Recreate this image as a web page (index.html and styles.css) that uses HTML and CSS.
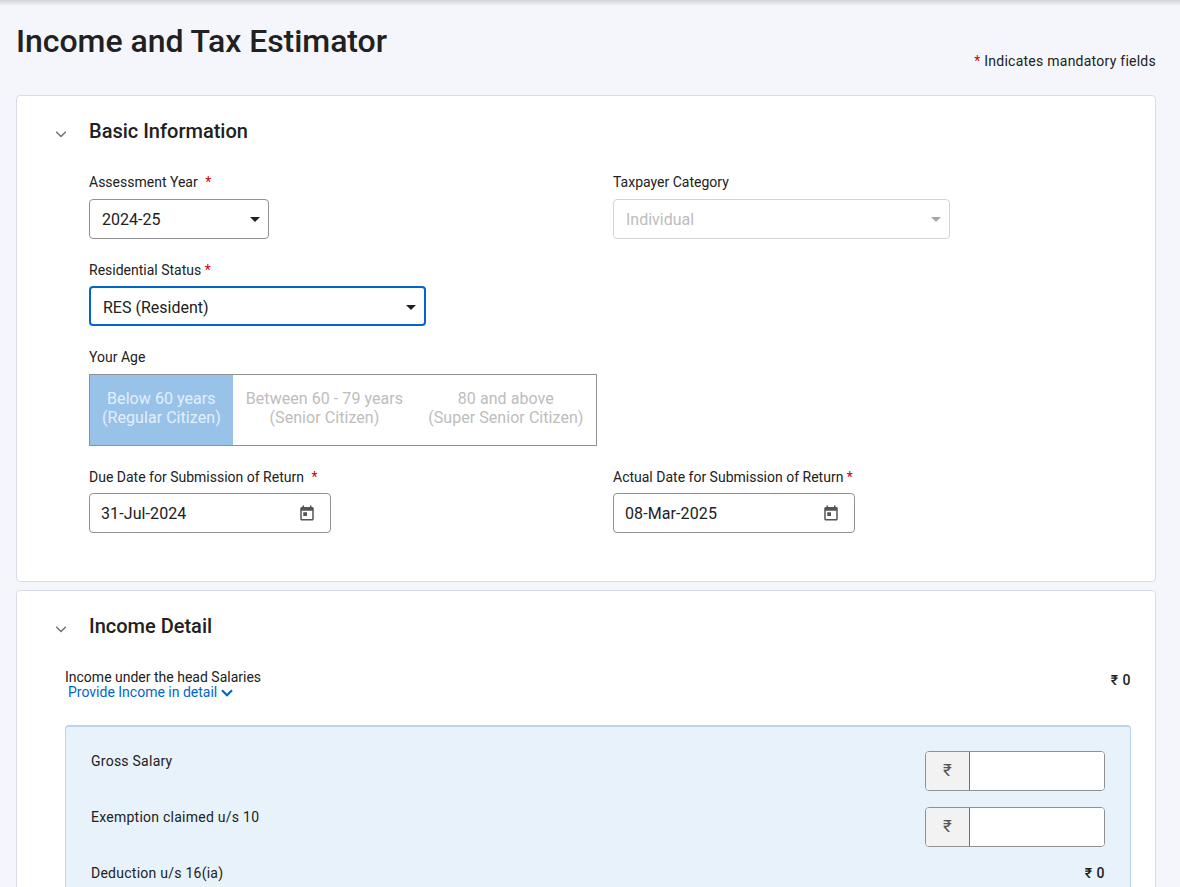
FILE: index.html
```html
<!DOCTYPE html>
<html lang="en">
<head>
    <meta charset="UTF-8">
    <meta name="viewport" content="width=device-width, initial-scale=1.0">
    <title>Income and Tax Estimator</title>
    <link rel="stylesheet" href="styles.css">
</head>
<body>
    <div class="top_shadow"></div>

    <div class="page_head">
        <h1>Income and Tax Estimator</h1>
        <p class="mandatory_note"><span class="req">*</span> Indicates mandatory fields</p>
    </div>

    <!-- Basic information -->
    <section class="card card_basic">
        <div class="card_head">
            <svg class="chevron" width="14" height="14" viewBox="0 0 14 14"><path d="M2.2 4.8 7 9.6l4.8-4.8" fill="none" stroke="#6f6f6f" stroke-width="1.4"/></svg>
            <h2>Basic Information</h2>
        </div>

        <div class="form_row row_year">
            <div class="field">
                <label>Assessment Year <span class="req req_gap">*</span></label>
                <div class="select select_year"><span>2024-25</span><i class="caret"></i></div>
            </div>
            <div class="field">
                <label>Taxpayer Category</label>
                <div class="select select_wide select_disabled"><span>Individual</span><i class="caret"></i></div>
            </div>
        </div>

        <div class="form_row row_status">
            <div class="field">
                <label>Residential Status <span class="req">*</span></label>
                <div class="select select_wide select_focus"><span>RES (Resident)</span><i class="caret"></i></div>
            </div>
        </div>

        <div class="form_row row_age">
            <div class="field">
                <label>Your Age</label>
                <div class="age_toggle">
                    <div class="age_opt age_active">Below 60 years<br>(Regular Citizen)</div>
                    <div class="age_opt age_mid">Between 60 - 79 years<br>(Senior Citizen)</div>
                    <div class="age_opt age_last">80 and above<br>(Super Senior Citizen)</div>
                </div>
            </div>
        </div>

        <div class="form_row row_dates">
            <div class="field">
                <label>Due Date for Submission of Return <span class="req req_gap">*</span></label>
                <div class="date_input">
                    <span>31-Jul-2024</span>
                    <svg width="18" height="18" viewBox="0 0 24 24"><path fill="#555" d="M19 4h-1V2h-2v2H8V2H6v2H5c-1.1 0-2 .9-2 2v14c0 1.1.9 2 2 2h14c1.1 0 2-.9 2-2V6c0-1.100-.9-2-2-2zm0 16H5V9h14v11zM7 11h5v5H7z"/></svg>
                </div>
            </div>
            <div class="field">
                <label>Actual Date for Submission of Return <span class="req">*</span></label>
                <div class="date_input">
                    <span>08-Mar-2025</span>
                    <svg width="18" height="18" viewBox="0 0 24 24"><path fill="#555" d="M19 4h-1V2h-2v2H8V2H6v2H5c-1.1 0-2 .9-2 2v14c0 1.1.9 2 2 2h14c1.1 0 2-.9 2-2V6c0-1.100-.9-2-2-2zm0 16H5V9h14v11zM7 11h5v5H7z"/></svg>
                </div>
            </div>
        </div>
    </section>

    <!-- Income detail -->
    <section class="card card_income">
        <div class="card_head">
            <svg class="chevron" width="14" height="14" viewBox="0 0 14 14"><path d="M2.2 4.8 7 9.6l4.8-4.8" fill="none" stroke="#6f6f6f" stroke-width="1.4"/></svg>
            <h2>Income Detail</h2>
        </div>

        <div class="income_head">
            <div>
                <div class="income_title">Income under the head Salaries</div>
                <a class="detail_link">Provide Income in detail
                    <svg width="12" height="8" viewBox="0 0 12 8"><path d="M1 1.3 6 6.3l5-5" fill="none" stroke="#0066cc" stroke-width="2.2"/></svg>
                </a>
            </div>
            <div class="amount amount_total">₹ 0</div>
        </div>

        <div class="salary_panel">
            <div class="salary_row">
                <span class="salary_label">Gross Salary</span>
                <div class="rupee_input"><span class="rupee_addon">₹</span><input type="text"></div>
            </div>
            <div class="salary_row">
                <span class="salary_label">Exemption claimed u/s 10</span>
                <div class="rupee_input"><span class="rupee_addon">₹</span><input type="text"></div>
            </div>
            <div class="salary_row">
                <span class="salary_label">Deduction u/s 16(ia)</span>
                <div class="amount amount_row">₹ 0</div>
            </div>
        </div>
    </section>
</body>
</html>
```
FILE: styles.css
```css
* {
    box-sizing: border-box;
}

html, body {
    height: 887px;
    overflow: hidden;
}

body {
    margin: 0;
    padding: 0 24px 0 16px;
    background-color: #f4f6fb;
    font-family: Roboto, "Noto Sans", sans-serif;
    color: #212121;
}

.top_shadow {
    height: 6px;
    margin: 0 -24px 0 -16px;
    background: linear-gradient(#d2d3d7, #f4f6fb);
}

.page_head {
    height: 89px;
    display: flex;
    justify-content: space-between;
    align-items: flex-start;
}

h1 {
    margin: 14px 0 0;
    font-size: 32px;
    line-height: 42px;
    font-weight: 500;
    letter-spacing: -0.04px;
}

.mandatory_note {
    margin: 46px 0 0;
    font-size: 14px;
    line-height: 18px;
    letter-spacing: 0.25px;
}

.req {
    color: #d50000;
}

.req_gap {
    margin-left: 4px;
}

.card {
    background-color: #fff;
    border: 1px solid #d8dcea;
    border-radius: 4px;
}

.card_basic {
    height: 487px;
    padding: 21px 0 0 72px;
}

.card_income {
    margin-top: 8px;
    height: 400px;
    padding: 21px 24px 0 48px;
}

.card_head {
    display: flex;
    align-items: center;
    height: 28px;
}

.card_basic .card_head {
    margin-left: -35px;
}

.card_income .card_head {
    margin-left: -11px;
}

.chevron {
    margin: 5px 21px 0 0;
}

h2 {
    margin: 0;
    font-size: 20px;
    line-height: 28px;
    font-weight: 500;
}

.form_row {
    display: flex;
}

.row_year {
    margin-top: 28px;
}

.row_status {
    margin-top: 22px;
}

.row_status label {
    margin-bottom: 7px;
}

.row_age {
    margin-top: 22px;
}

.row_dates {
    margin-top: 22px;
}

.row_dates label {
    margin-bottom: 7px;
}

.field {
    width: 524px;
}

label {
    display: block;
    height: 18px;
    margin-bottom: 8px;
    font-size: 14px;
    line-height: 18px;
}

.select, .date_input {
    display: flex;
    align-items: center;
    justify-content: space-between;
    height: 40px;
    border: 1px solid #919191;
    border-radius: 4px;
    background-color: #fff;
    font-size: 16px;
}

.select {
    padding: 0 8px 0 12px;
}

.select_year {
    width: 180px;
}

.select_wide {
    width: 337px;
}

.select_disabled {
    border-color: #d4d4d4;
    color: #bdbdbd;
}

.select_focus {
    border: 2px solid #0066cc;
    padding-top: 2px;
}

.caret {
    width: 0;
    height: 0;
    border-left: 5px solid transparent;
    border-right: 5px solid transparent;
    border-top: 5px solid #212121;
}

.select_disabled .caret {
    border-top-color: #a6a6a6;
}

.age_toggle {
    display: flex;
    width: 508px;
    height: 72px;
    border: 1px solid #919191;
}

.age_opt {
    flex: none;
    display: flex;
    align-items: center;
    padding: 0 12px 4px;
    text-align: center;
    white-space: nowrap;
    font-size: 16px;
    line-height: 19px;
    letter-spacing: 0.06px;
    color: #bdbdbd;
}

.age_mid {
    padding-left: 13px;
    padding-right: 12px;
}

.age_last {
    padding-left: 13px;
}

.age_active {
    background-color: #99c2e9;
    color: #e3effb;
}

.date_input {
    width: 242px;
    padding: 0 14px 0 11px;
    letter-spacing: 0.1px;
}

.income_head {
    display: flex;
    justify-content: space-between;
    margin-top: 29px;
}

.income_title {
    font-size: 14px;
    line-height: 16px;
}

.detail_link {
    display: block;
    margin-left: 3px;
    font-size: 14px;
    line-height: 14px;
    color: #0066cc;
}

.amount {
    font-size: 14px;
    font-weight: 500;
    letter-spacing: 0.5px;
}

.amount_total {
    margin-top: 3px;
}

.salary_panel {
    margin-top: 26px;
    height: 300px;
    padding: 24px 25px 0;
    background-color: #e8f2fb;
    border: 1px solid #bcd4ec;
    border-top-width: 2px;
    border-radius: 4px;
}

.salary_row {
    display: flex;
    justify-content: space-between;
    height: 56px;
    font-size: 14px;
    letter-spacing: 0.25px;
}

.salary_label {
    margin-top: 2px;
}

.amount_row {
    margin-top: 2px;
}

.rupee_input {
    display: flex;
    width: 180px;
    height: 40px;
    border: 1px solid #919191;
    border-radius: 4px;
    overflow: hidden;
    background-color: #fff;
}

.rupee_addon {
    width: 44px;
    padding-bottom: 2px;
    display: flex;
    align-items: center;
    justify-content: center;
    background-color: #f2f2f2;
    border-right: 1px solid #6f6f6f;
    font-size: 17px;
    color: #555;
}

.rupee_input input {
    flex: 1;
    min-width: 0;
    border: none;
    outline: none;
}
```
